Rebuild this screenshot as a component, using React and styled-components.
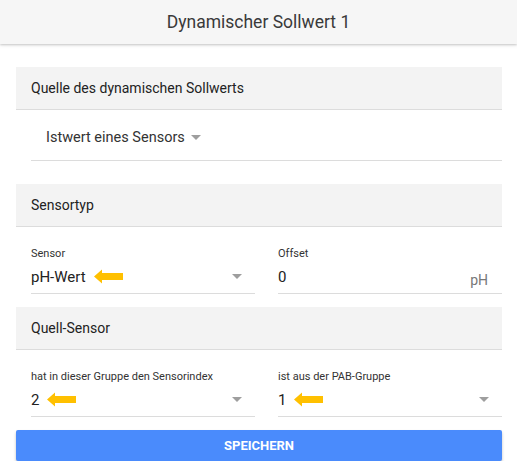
import React from "react";
import styled, { createGlobalStyle } from "styled-components";

// ********
// component
// ********

const Arrow = () => (
	<ArrowSvg width="30" height="15" viewBox="0 0 30 15">
		<path d="M0 7.5 L8 0.5 L8 4 L29 4 L29 11 L8 11 L8 14.5 Z" fill="#ffc000" />
	</ArrowSvg>
);

const Caret = () => (
	<CaretSvg width="10" height="5" viewBox="0 0 10 5">
		<path d="M0 0 L10 0 L5 5 Z" fill="#9e9e9e" />
	</CaretSvg>
);

function SelectField({ label, value, marked }) {
	return (
		<Field>
			<Label>{label}</Label>
			<Control>
				<Value>{value}</Value>
				{marked && <Arrow />}
				<Spacer />
				<Caret />
			</Control>
		</Field>
	);
}

export default function App() {
	return (
		<>
			<GlobalStyle />
			<TopBar>Dynamischer Sollwert 1</TopBar>
			<Content>
				<SectionHead>Quelle des dynamischen Sollwerts</SectionHead>
				<InlineSelect>
					<span>Istwert eines Sensors</span>
					<Caret />
				</InlineSelect>

				<SectionHead>Sensortyp</SectionHead>
				<FieldRow>
					<SelectField label="Sensor" value="pH-Wert" marked />
					<Field>
						<Label>Offset</Label>
						<Control>
							<Value>0</Value>
							<Spacer />
							<Unit>pH</Unit>
						</Control>
					</Field>
				</FieldRow>

				<SectionHead>Quell-Sensor</SectionHead>
				<FieldRow>
					<SelectField label="hat in dieser Gruppe den Sensorindex" value="2" marked />
					<SelectField label="ist aus der PAB-Gruppe" value="1" marked />
				</FieldRow>

				<SaveButton>SPEICHERN</SaveButton>
			</Content>
		</>
	);
}

// ********
// styles
// ********

const GlobalStyle = createGlobalStyle`
	body {
		margin: 0;
		background: #fff;
		font-family: Roboto, "Liberation Sans", sans-serif;
		color: #212121;
	}
`;
const TopBar = styled.div`
	height: 44px;
	display: flex;
	align-items: center;
	justify-content: center;
	background: #f6f6f6;
	box-shadow: 0 1px 2px rgba(0, 0, 0, 0.18), 0 2px 4px rgba(0, 0, 0, 0.06);
	font-size: 17.5px;
	color: #3a3a3a;
`;
const Content = styled.div`
	padding: 23px 15px 0 16px;
	display: flex;
	flex-direction: column;
`;
const SectionHead = styled.div`
	height: 42px;
	display: flex;
	align-items: center;
	padding-left: 15px;
	background: #f3f3f3;
	border-bottom: 1px solid #dcdcdc;
	font-size: 14px;
	color: #222;
`;
const InlineSelect = styled.div`
	margin: 14px 0 23px 15px;
	padding: 0 0 10px 15px;
	height: 26px;
	display: flex;
	align-items: center;
	gap: 6px;
	border-bottom: 1px solid #dcdcdc;
	font-size: 14.5px;
	color: #333;
`;
const FieldRow = styled.div`
	display: grid;
	grid-template-columns: 1fr 1fr;
	gap: 23px;
	padding: 19px 0 13px 15px;
`;
const Field = styled.div`
	display: flex;
	flex-direction: column;
	border-bottom: 1px solid #dcdcdc;
`;
const Label = styled.div`
	font-size: 11px;
	color: #333;
	height: 16px;
	line-height: 16px;
`;
const Control = styled.div`
	height: 29px;
	display: flex;
	align-items: center;
	padding-right: 13px;
	padding-bottom: 2px;
`;
const Value = styled.span`
	font-size: 15px;
	color: #222;
`;
const Spacer = styled.span`
	flex: 1;
`;
const Unit = styled.span`
	font-size: 14px;
	color: #777;
	margin-top: 6px;
	margin-right: 1px;
`;
const ArrowSvg = styled.svg`
	margin-left: 8px;
	display: block;
`;
const CaretSvg = styled.svg`
	display: block;
`;
const SaveButton = styled.button`
	height: 31px;
	border: none;
	border-radius: 2px;
	background: #4a8bfc;
	color: #fff;
	font-family: Roboto, "Liberation Sans", sans-serif;
	font-weight: 700;
	font-size: 13px;
	box-shadow: 0 2px 3px rgba(0, 0, 0, 0.25);
`;
